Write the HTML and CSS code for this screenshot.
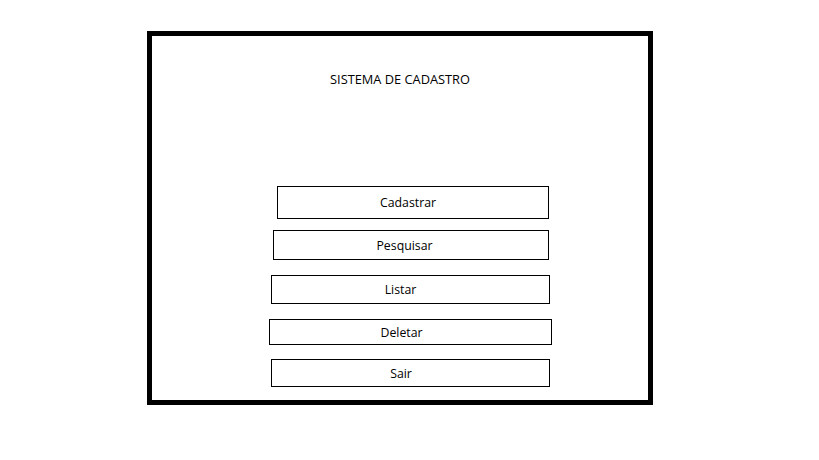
FILE: index.html
```html
<!doctype html>
<html lang="pt-BR">
  <head>
    <meta charset="UTF-8" />
    <title>Sistema de Cadastro</title>
    <link rel="stylesheet" href="styles.css">
  </head>
  <body>
    <div class="frame">
      <h1 class="title">SISTEMA DE CADASTRO</h1>

      <div class="menu">
        <button class="menu-button btn-cadastrar">Cadastrar</button>
        <button class="menu-button btn-pesquisar">Pesquisar</button>
        <button class="menu-button btn-listar">Listar</button>
        <button class="menu-button btn-deletar">Deletar</button>
        <button class="menu-button btn-sair">Sair</button>
      </div>
    </div>
  </body>
</html>
```

FILE: styles.css
```css
body {
  margin: 0;
  background: #fff;
  color: #000;
  font-family: "Open Sans", "Noto Sans", sans-serif;
}
.frame {
  box-sizing: border-box;
  width: 506px;
  height: 374px;
  margin: 31px 0 0 147px;
  border: 5px solid #000;
}
.title {
  margin: 35px 0 0;
  font-size: 12.8px;
  font-weight: normal;
  line-height: 16px;
  text-align: center;
}
.menu {
  display: flex;
  flex-direction: column;
  align-items: flex-start;
  margin-top: 99px;
}
.menu-button {
  box-sizing: border-box;
  display: block;
  padding: 0;
  border: 1px solid #000;
  background: #fff;
  color: #000;
  font-family: inherit;
  font-size: 12.3px;
  text-align: center;
  cursor: pointer;
}
.btn-cadastrar {
  margin-left: 125px;
  width: 272px;
  height: 33px;
  padding-right: 10px;
}
.btn-pesquisar {
  margin: 11px 0 0 121px;
  width: 276px;
  height: 30px;
  padding-right: 13px;
}
.btn-listar {
  margin: 15px 0 0 119px;
  width: 279px;
  height: 29px;
  padding-right: 20px;
}
.btn-deletar {
  margin: 15px 0 0 117px;
  width: 283px;
  height: 26px;
  padding-right: 18px;
}
.btn-sair {
  margin: 14px 0 0 119px;
  width: 279px;
  height: 28px;
  padding-right: 19px;
}
```
